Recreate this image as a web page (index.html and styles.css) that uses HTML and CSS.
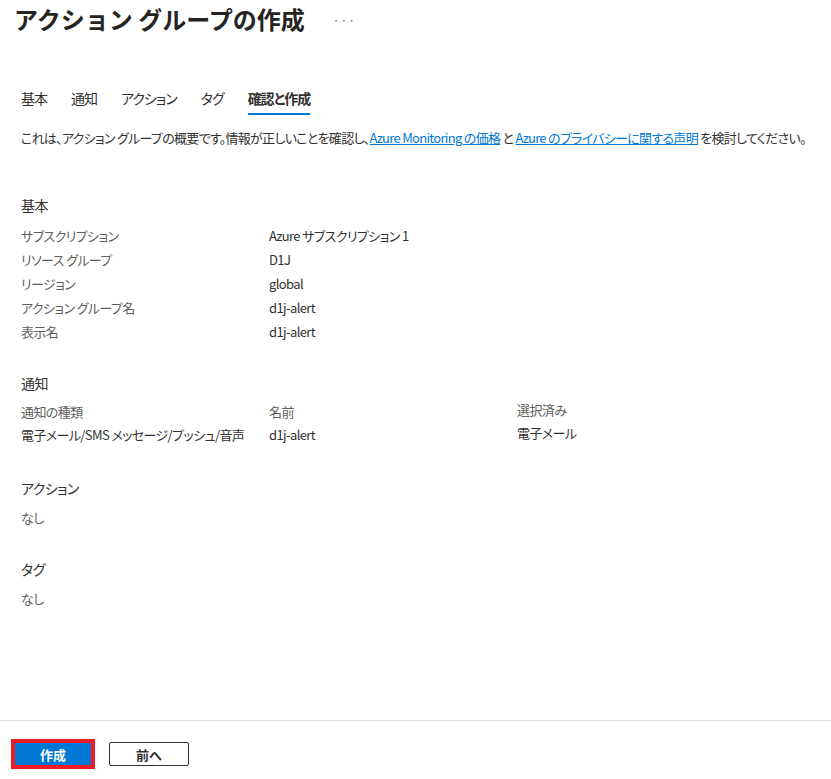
FILE: index.html
```html
<!DOCTYPE html>
<html lang="ja">
<head>
    <meta charset="UTF-8">
    <meta name="viewport" content="width=device-width, initial-scale=1.0">
    <title>アクション グループの作成</title>
    <link rel="stylesheet" href="styles.css">
</head>
<body>
    <div class="page">
        <div class="title-bar">
            <h1>アクション グループの作成</h1>
            <span class="more">···</span>
        </div>

        <div class="tabs">
            <span class="tab">基本</span>
            <span class="tab">通知</span>
            <span class="tab">アクション</span>
            <span class="tab">タグ</span>
            <span class="tab active">確認と作成</span>
        </div>

        <p class="summary">これは、アクション グループの概要です。情報が正しいことを確認し、<a href="#">Azure Monitoring の価格</a> と <a href="#">Azure のプライバシーに関する声明</a> を検討してください。</p>

        <div class="section basics">
            <h2>基本</h2>
            <div class="props">
                <div class="label">サブスクリプション</div>
                <div class="value">Azure サブスクリプション 1</div>
                <div class="label">リソース グループ</div>
                <div class="value">D1J</div>
                <div class="label">リージョン</div>
                <div class="value">global</div>
                <div class="label">アクション グループ名</div>
                <div class="value">d1j-alert</div>
                <div class="label">表示名</div>
                <div class="value">d1j-alert</div>
            </div>
        </div>

        <div class="section notify">
            <h2>通知</h2>
            <div class="notify-grid">
                <div class="label">通知の種類</div>
                <div class="label">名前</div>
                <div class="label raised">選択済み</div>
                <div class="value">電子メール/SMS メッセージ/プッシュ/音声</div>
                <div class="value">d1j-alert</div>
                <div class="value raised">電子メール</div>
            </div>
        </div>

        <div class="section actions">
            <h2>アクション</h2>
            <div class="label none">なし</div>
        </div>

        <div class="section tags">
            <h2>タグ</h2>
            <div class="label none">なし</div>
        </div>
    </div>

    <div class="footer">
        <div class="highlight">
            <button class="btn primary">作成</button>
        </div>
        <button class="btn secondary">前へ</button>
    </div>
</body>
</html>
```

FILE: styles.css
```css
html, body {
    margin: 0;
    height: 100%;
}
body {
    display: flex;
    flex-direction: column;
    font-family: "Noto Sans CJK JP", "Noto Sans", sans-serif;
    font-feature-settings: "palt";
    font-size: 13px;
    letter-spacing: -0.6px;
    color: #323130;
    background: #fff;
}
.page {
    flex: 1;
}
.title-bar {
    display: flex;
    align-items: center;
    margin: 5px 0 0 14px;
    height: 28px;
}
h1 {
    margin: 0;
    font-size: 24px;
    font-weight: 700;
    line-height: 28px;
    letter-spacing: 0;
    font-feature-settings: normal;
    color: #252423;
}
.more {
    margin-left: 28px;
    font-size: 12px;
    color: #605e5c;
    letter-spacing: 1px;
}
.tabs {
    display: flex;
    gap: 24px;
    margin: 55px 0 0 21px;
}
.tab {
    font-size: 14px;
    line-height: 20px;
    letter-spacing: -1px;
    padding-bottom: 5px;
    border-bottom: 2px solid transparent;
}
.tab.active {
    font-weight: 700;
    border-bottom-color: #0078d4;
}
.summary {
    margin: 13px 0 0 21px;
    line-height: 20px;
    white-space: nowrap;
    letter-spacing: -0.7px;
}
.summary a {
    color: #0078d4;
    text-decoration: underline;
}
.section {
    margin: 0 0 0 21px;
}
.section h2 {
    margin: 0;
    font-size: 14px;
    font-weight: 400;
    line-height: 20px;
}
.basics {
    margin-top: 47px;
}
.notify {
    margin-top: 29px;
}
.actions {
    margin-top: 31px;
}
.tags {
    margin-top: 29px;
}
.props {
    display: grid;
    grid-template-columns: 248px 1fr;
    margin-top: 9px;
    line-height: 24px;
}
.notify-grid {
    display: grid;
    grid-template-columns: 248px 248px 1fr;
    margin-top: 8px;
    line-height: 22px;
}
.notify-grid .value {
    line-height: 24px;
}
.raised {
    position: relative;
    top: -2px;
}
.label {
    color: #605e5c;
}
.value {
    color: #323130;
}
.none {
    margin-top: 8px;
    line-height: 24px;
}
.footer {
    display: flex;
    align-items: center;
    gap: 14px;
    border-top: 1px solid #e1dfdd;
    padding: 18px 0 10px 11px;
}
.highlight {
    border: 4px solid #ed1c24;
    display: flex;
}
.btn {
    font-family: inherit;
    font-size: 13px;
    font-weight: 700;
    line-height: 1;
    border-radius: 2px;
    cursor: pointer;
    padding: 0;
}
.primary {
    width: 76px;
    height: 22px;
    background: #0078d4;
    color: #fff;
    border: none;
    border-radius: 0;
}
.secondary {
    width: 80px;
    height: 24px;
    background: #fff;
    color: #323130;
    border: 1px solid #323130;
}
```
